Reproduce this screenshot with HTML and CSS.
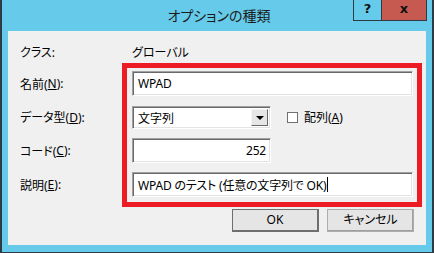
FILE: index.html
```html
<!DOCTYPE html>
<html lang="ja">
<head>
    <meta charset="UTF-8">
    <title>オプションの種類</title>
    <link rel="stylesheet" href="styles.css">
</head>
<body>
    <div class="window">
        <div class="titlebar">
            <span></span>
            <span class="title">オプションの種類</span>
            <div class="caption-buttons">
                <span class="cap help">?</span>
                <span class="cap close">x</span>
            </div>
        </div>
        <div class="client">
            <div class="class-row">
                <span class="class-label">クラス:</span>
                <span>グローバル</span>
            </div>
            <div class="form">
                <div class="labels">
                    <div class="label">名前(<u>N</u>):</div>
                    <div class="label short">データ型(<u>D</u>):</div>
                    <div class="label">コード(<u>C</u>):</div>
                    <div class="label">説明(<u>E</u>):</div>
                </div>
                <div class="fields">
                    <div class="field wide">WPAD</div>
                    <div class="row-select">
                        <div class="select">
                            <span class="select-text">文字列</span>
                            <span class="drop"><span class="arrow"></span></span>
                        </div>
                        <span class="checkbox"></span>
                        <span>配列(<u>A</u>)</span>
                    </div>
                    <div class="field narrow number">252</div>
                    <div class="field wide">WPAD のテスト (任意の文字列で OK)<span class="caret"></span></div>
                </div>
            </div>
            <div class="buttons">
                <span class="button default">OK</span>
                <span class="button">キャンセル</span>
            </div>
        </div>
    </div>
</body>
</html>
```

FILE: styles.css
```css
body {
    margin: 0;
    font-family: "Noto Sans", "Noto Sans CJK JP", sans-serif;
    font-size: 12px;
    font-feature-settings: "palt";
    color: #000;
}

.window {
    width: 434px;
    height: 253px;
    box-sizing: border-box;
    background: #66cbea;
    border-left: 2px solid #2d3b45;
    border-right: 2px solid #2d3b45;
    border-bottom: 1px solid #2d3b45;
    display: flex;
    flex-direction: column;
}

.titlebar {
    height: 31px;
    padding: 0 5px 0 9px;
    display: grid;
    grid-template-columns: 1fr auto 1fr;
}

.title {
    font-size: 14px;
    line-height: 31px;
    color: #1b1b1b;
}

.caption-buttons {
    justify-self: end;
    display: flex;
    height: 21px;
}

.cap {
    box-sizing: border-box;
    height: 21px;
    border: 1px solid #2d3b45;
    border-top: none;
    font-family: "DejaVu Sans", sans-serif;
    font-weight: bold;
    text-align: center;
    line-height: 18px;
    color: #111;
}

.help {
    width: 29px;
    font-size: 13px;
}

.close {
    width: 45px;
    border-left: none;
    background: #c65a50;
    font-size: 13px;
}

.client {
    margin: 0 6px 0 6px;
    height: 214px;
    background: #f0f0f0;
    display: flex;
    flex-direction: column;
}

.class-row {
    display: flex;
    height: 16px;
    align-items: center;
    margin-top: 13px;
    padding-left: 12px;
}

.class-label {
    width: 112px;
}

.form {
    display: flex;
    margin-top: 3px;
    padding-left: 12px;
}

.labels {
    width: 102px;
    padding-top: 8px;
    display: flex;
    flex-direction: column;
    gap: 9px;
}

.label {
    height: 25px;
    display: flex;
    align-items: center;
}

.label.short {
    height: 24px;
}

.fields {
    width: 300px;
    box-sizing: border-box;
    border: 5px solid #ed1c24;
    padding: 3px 4px 5px 5px;
    display: flex;
    flex-direction: column;
    gap: 9px;
}

.field, .select {
    box-sizing: border-box;
    height: 25px;
    background: #fff;
    border: 1px solid;
    border-color: #a0a0a0 #fff #fff #a0a0a0;
    box-shadow: inset 1px 1px 0 #696969, inset -1px -1px 0 #e3e3e3;
    display: flex;
    align-items: center;
    padding: 0 4px 0 5px;
}

.field {
    letter-spacing: -0.2px;
}

.wide {
    width: 281px;
}

.narrow {
    width: 139px;
}

.number {
    justify-content: flex-end;
}

.caret {
    width: 1px;
    height: 15px;
    margin-left: 1px;
    background: #000;
}

.row-select {
    height: 24px;
    display: flex;
    align-items: flex-end;
}

.row-select > span:last-child {
    height: 23px;
    line-height: 23px;
}

.select {
    width: 139px;
    height: 23px;
    padding: 2px 2px 2px 5px;
    align-items: stretch;
}

.select-text {
    flex: 1;
    line-height: 19px;
}

.drop {
    width: 17px;
    box-sizing: border-box;
    background: #e6e6e6;
    border: 1px solid;
    border-color: #f4f4f4 #696969 #696969 #f4f4f4;
    display: flex;
    align-items: center;
    justify-content: center;
}

.arrow {
    width: 0;
    height: 0;
    border-left: 4px solid transparent;
    border-right: 4px solid transparent;
    border-top: 4px solid #000;
    margin-top: 1px;
}

.checkbox {
    width: 11px;
    height: 11px;
    box-sizing: border-box;
    border: 1px solid #707070;
    background: #fff;
    margin: 0 6px 6px 16px;
    align-self: flex-end;
}

.buttons {
    display: flex;
    justify-content: flex-end;
    gap: 8px;
    margin-top: 2px;
    padding-right: 12px;
}

.button {
    box-sizing: border-box;
    width: 87px;
    height: 23px;
    background: #e5e5e5;
    border: 1px solid #adadad;
    box-shadow: inset -1px -1px 0 #a0a0a0;
    text-align: center;
    line-height: 20px;
}

.button.default {
    border-color: #6e6e6e;
    border-width: 1px 2px 2px 1px;
    box-shadow: none;
}
```
